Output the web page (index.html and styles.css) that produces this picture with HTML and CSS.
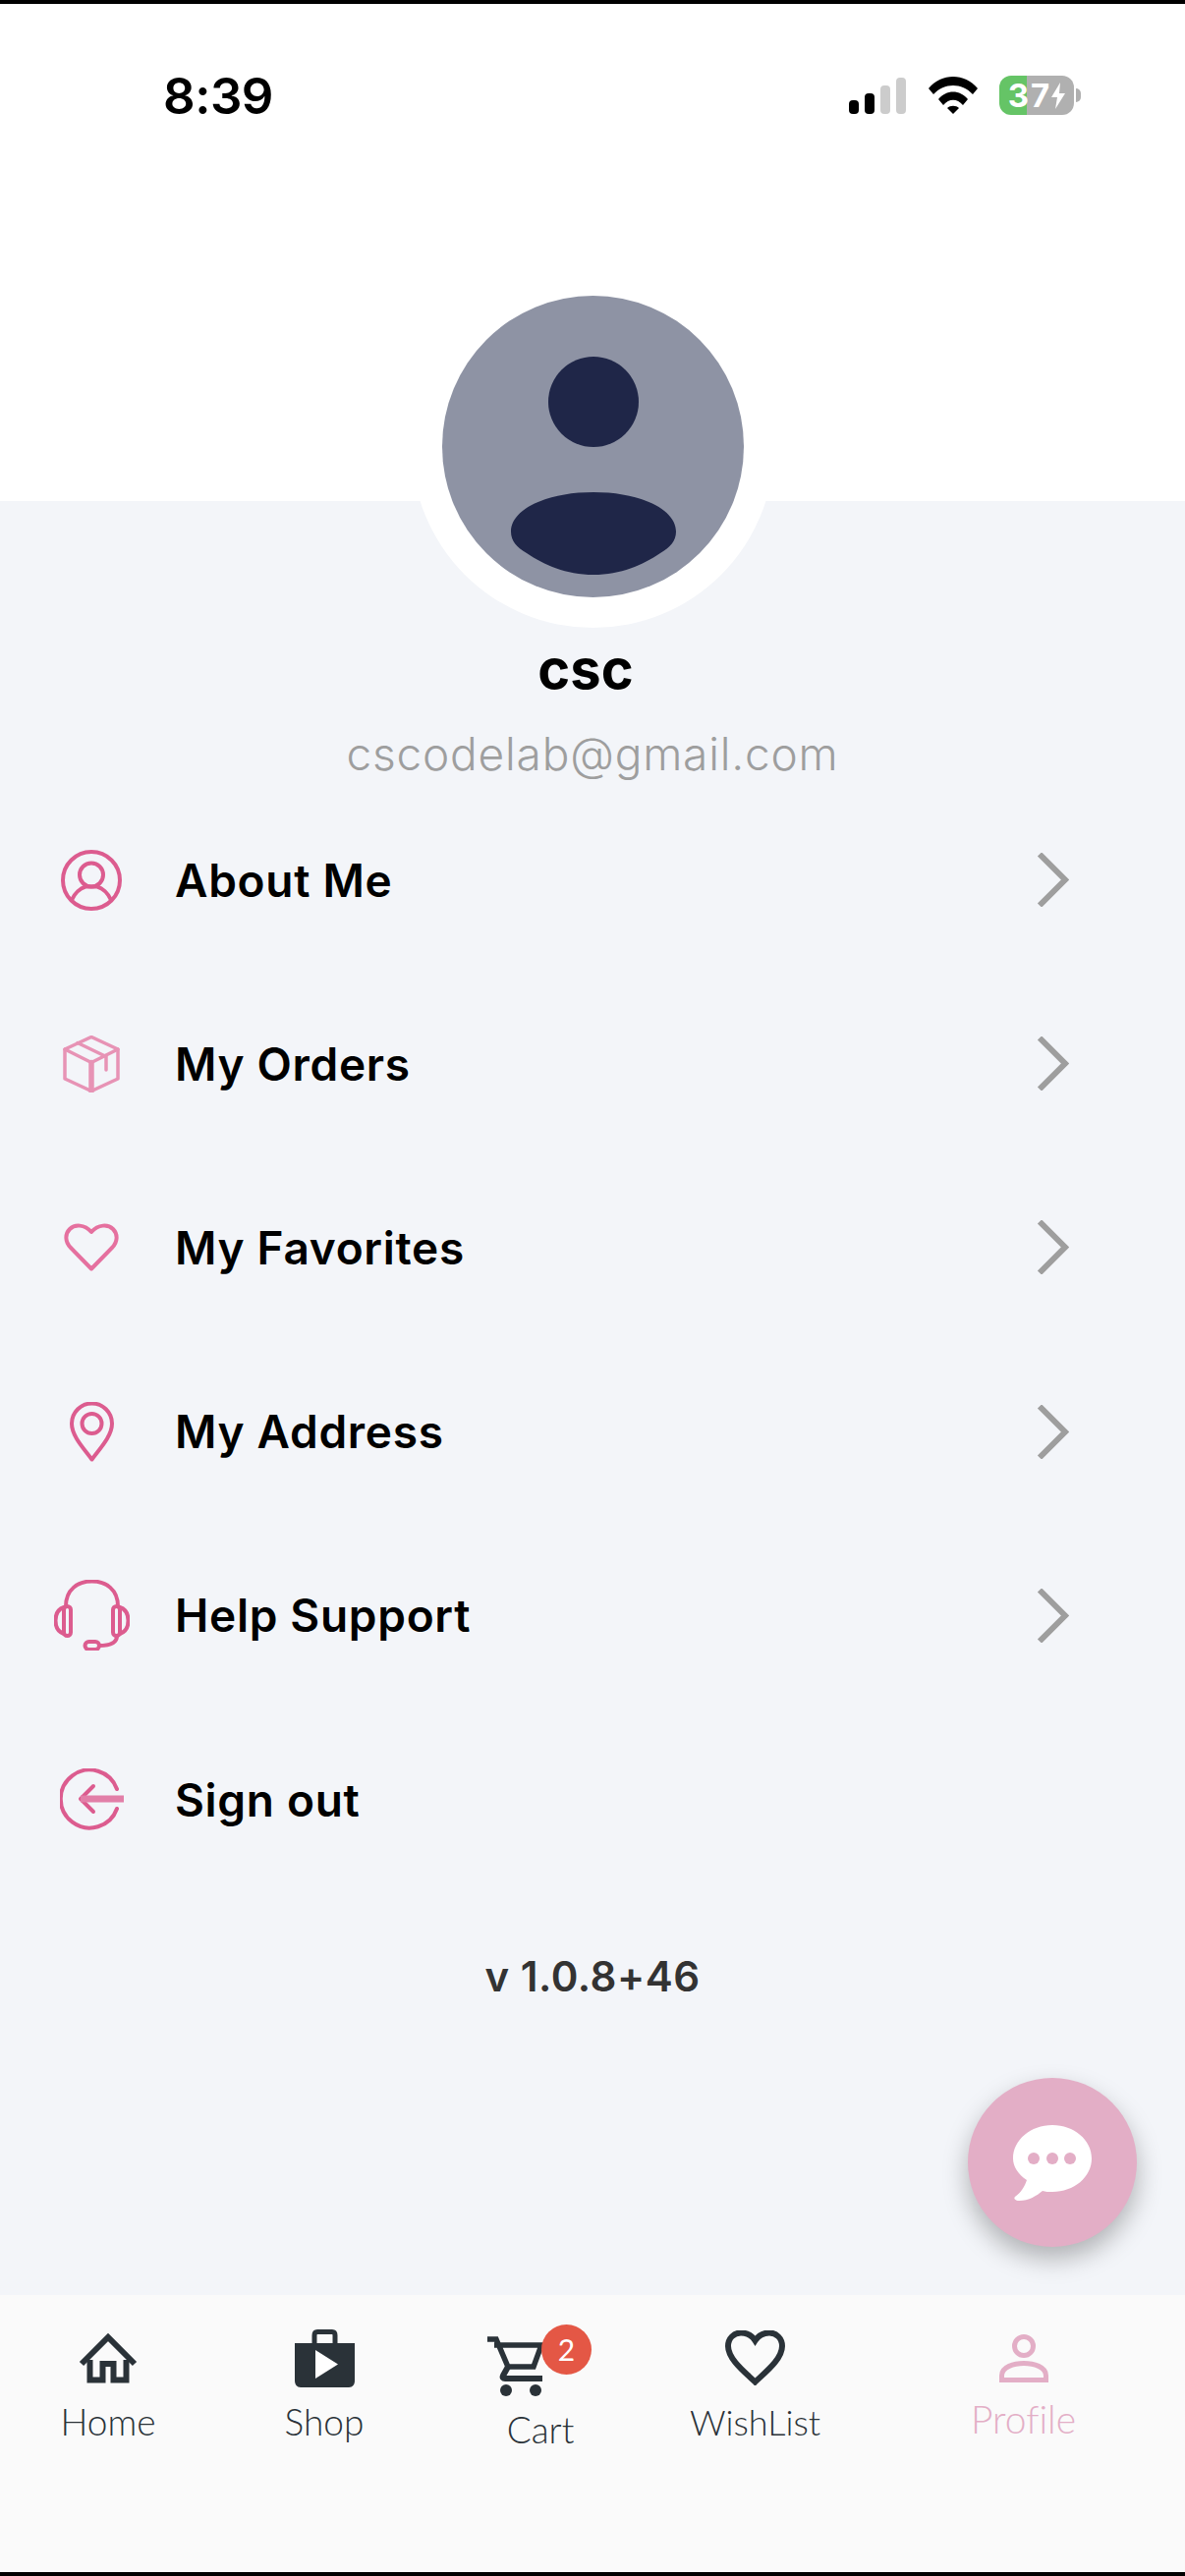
FILE: index.html
```html
<!DOCTYPE html>
<html lang="en">
<head>
<meta charset="utf-8">
<title>Profile</title>
<link rel="stylesheet" href="styles.css">
</head>
<body>
<div class="phone">
  <header class="top">
    <div class="status">
      <span class="time">8:39</span>
      <div class="status-icons">
        <svg class="signal" width="58" height="37" viewBox="0 0 58 37"><rect x="0" y="23" width="10" height="14" rx="4" fill="#000"/><rect x="16" y="16" width="10" height="21" rx="4" fill="#000"/><rect x="32" y="8" width="10" height="29" rx="4" fill="#ccc"/><rect x="48" y="0" width="10" height="37" rx="4" fill="#ccc"/></svg>
        <svg class="wifi" width="50" height="38" viewBox="0 0 50 38"><path d="M0 12C13-4 37-4 50 12L45 18C34 6 16 6 5 18Z"/><path d="M10 23C18 13 32 13 40 23L35 29C29 22 21 22 15 29Z"/><path d="M19 32C22 29 28 29 31 32L25 38Z"/></svg>
        <div class="battery">
          <div class="battery-body"><span class="battery-num">37</span><svg width="14" height="27" viewBox="0 0 14 27"><path d="M9 0L0 15H6L4 27L14 11H8Z" fill="#fff"/></svg></div>
          <span class="battery-nub"></span>
        </div>
      </div>
    </div>
    <div class="avatar-ring">
      <svg class="avatar" width="307" height="307" viewBox="0 0 307 307"><circle cx="153.500" cy="153.500" r="153.500" fill="#8e93a4"/><circle cx="154" cy="108" r="46" fill="#1f2648"/><path d="M70 240C70 218 105 200 154 200C203 200 238 218 238 240C238 250 232 256 222 262C204 274 182 284 154 284C126 284 104 274 86 262C76 256 70 250 70 240Z" fill="#1f2648"/></svg>
    </div>
  </header>

  <main class="main">
    <h1 class="name">csc</h1>
    <p class="email">cscodelab@gmail.com</p>
    <ul class="menu">
      <li class="row">
        <span class="row-icon"><svg width="62" height="62" viewBox="0 0 62 62" class="ic strong"><circle cx="31" cy="31" r="29"/><circle cx="31" cy="25.500" r="12"/><path d="M11 51C14 44 20 39 25 37.500H37C42 39 48 44 51 51"/></svg></span>
        <span class="row-label">About Me</span>
        <svg class="chev" width="33" height="55" viewBox="0 0 33 55"><path d="M3 1.500L29 27.500L3 53.500"/></svg>
      </li>
      <li class="row">
        <span class="row-icon"><svg width="58" height="58" viewBox="0 0 58 58" class="ic pale"><path d="M29 1.500L56 14V44L29 56.500L2 44V14Z"/><path d="M2 14L29 27.500L56 14"/><path d="M15 7.500L43 21"/><path d="M44 20.500V35"/><path d="M29 27.500V56.500" class="thick"/></svg></span>
        <span class="row-label">My Orders</span>
        <svg class="chev" width="33" height="55" viewBox="0 0 33 55"><path d="M3 1.500L29 27.500L3 53.500"/></svg>
      </li>
      <li class="row">
        <span class="row-icon"><svg width="56" height="49" viewBox="0 0 56 49" class="ic mid"><path d="M28 46.500L7 25C1 19 1 11 6 6C11 1 21 1 28 9C35 1 45 1 50 6C55 11 55 19 49 25Z"/></svg></span>
        <span class="row-label">My Favorites</span>
        <svg class="chev" width="33" height="55" viewBox="0 0 33 55"><path d="M3 1.500L29 27.500L3 53.500"/></svg>
      </li>
      <li class="row">
        <span class="row-icon"><svg width="45" height="61" viewBox="0 0 45 61" class="ic strong"><path d="M22.500 58.500C15 48 2 35 2 22A20.500 20.500 0 0 1 43 22C43 35 30 48 22.500 58.500Z"/><circle cx="22.500" cy="22" r="10"/></svg></span>
        <span class="row-label">My Address</span>
        <svg class="chev" width="33" height="55" viewBox="0 0 33 55"><path d="M3 1.500L29 27.500L3 53.500"/></svg>
      </li>
      <li class="row">
        <span class="row-icon"><svg width="77" height="72" viewBox="0 0 77 72" class="ic strong"><path d="M12 27C12 10 24 1.500 38.500 1.500S65 10 65 27"/><rect x="10" y="27" width="7" height="30" rx="3.500"/><rect x="60" y="27" width="7" height="30" rx="3.500"/><path d="M10 28C4 30 1.500 35 1.500 41.500S4 53 10 55"/><path d="M67 28C73 30 75.500 35 75.500 41.500S73 53 67 55"/><path d="M64 57C64 64 58 67 46 67"/><rect x="31.500" y="63" width="14.500" height="8" rx="4"/></svg></span>
        <span class="row-label">Help Support</span>
        <svg class="chev" width="33" height="55" viewBox="0 0 33 55"><path d="M3 1.500L29 27.500L3 53.500"/></svg>
      </li>
      <li class="row">
        <span class="row-icon"><svg width="65" height="63" viewBox="0 0 65 63" class="ic strong"><path d="M58 21A29.500 29.500 0 1 0 58 41"/><path d="M34 18L21 31L34 44"/><path d="M21 31H65" class="thick-pale"/></svg></span>
        <span class="row-label">Sign out</span>
      </li>
    </ul>
    <p class="version">v 1.0.8+46</p>
    <button class="fab" type="button" aria-label="Chat">
      <svg width="80" height="77" viewBox="0 0 80 77"><path d="M40 0C62 0 80 15 80 34C80 53 62 68 40 68C36 68 33 68 30 67C24 72 16 77 6 77C3 77 0 75 2 73C8 69 12 62 14 56C5 50 0 42 0 34C0 15 18 0 40 0Z" fill="#fff"/><circle cx="21" cy="34" r="6" fill="#e3aec6"/><circle cx="40" cy="34" r="6" fill="#e3aec6"/><circle cx="58" cy="34" r="6" fill="#e3aec6"/></svg>
    </button>
  </main>

  <nav class="nav">
    <div class="nav-item">
      <span class="nav-icon"><svg width="60" height="52" viewBox="0 0 60 52" class="dark-line"><path d="M3 32L30 5L57 32"/><path d="M11.500 28V48.500H24.500V32H35.500V48.500H48.500V28"/></svg></span>
      <span class="nav-label">Home</span>
    </div>
    <div class="nav-item">
      <span class="nav-icon"><svg width="61" height="59" viewBox="0 0 61 59"><path d="M20 15V6C20 4 21 2.500 23 2.500H38C40 2.500 41 4 41 6V15" fill="none" stroke="#2a3238" stroke-width="5"/><path d="M0 14H61V52C61 56 59 59 55 59H6C2 59 0 56 0 52Z" fill="#2a3238"/><path d="M21 21L44 35.500L21 50Z" fill="#fff"/></svg></span>
      <span class="nav-label">Shop</span>
    </div>
    <div class="nav-item nav-item-cart">
      <span class="nav-icon">
        <svg width="57" height="61" viewBox="0 0 57 61"><path d="M0 3H9L21 31H47L55 9H7" fill="none" stroke="#2a3238" stroke-width="5.500"/><path d="M21 31L16 40C15 42 16 43 18 43H56" fill="none" stroke="#2a3238" stroke-width="6"/><circle cx="19" cy="55" r="6" fill="#2a3238"/><circle cx="49" cy="55" r="6" fill="#2a3238"/></svg>
        <span class="badge">2</span>
      </span>
      <span class="nav-label">Cart</span>
    </div>
    <div class="nav-item">
      <span class="nav-icon"><svg width="61" height="56" viewBox="0 0 61 56" class="dark-line"><path d="M30.500 52.500C22 44 3 30 3 16C3 8 9 2.500 16 2.500C22 2.500 27 5 30.500 10.500C34 5 39 2.500 45 2.500C52 2.500 58 8 58 16C58 30 39 44 30.500 52.500Z"/></svg></span>
      <span class="nav-label nav-label-tight">WishList</span>
    </div>
    <div class="nav-item nav-item-active">
      <span class="nav-icon"><svg width="50" height="49" viewBox="0 0 50 49"><circle cx="25" cy="12" r="9.500" fill="none" stroke="#e3aec6" stroke-width="5"/><path d="M2.500 46.500V42C2.500 33 15 29.500 25 29.500S47.500 33 47.500 42V46.500Z" fill="none" stroke="#e3aec6" stroke-width="5"/></svg></span>
      <span class="nav-label">Profile</span>
    </div>
  </nav>
</div>
</body>
</html>
```
FILE: styles.css
```css
* { box-sizing: border-box; }
html, body { margin: 0; padding: 0; }
body { background: #000; font-family: "Inter", "Liberation Sans", sans-serif; }
.phone {
  width: 1206px;
  height: 2622px;
  display: flex;
  flex-direction: column;
  border-top: 4px solid #000;
  border-bottom: 4px solid #000;
  overflow: hidden;
}
.top {
  height: 506px;
  flex: none;
  background: #fff;
  display: flex;
  flex-direction: column;
  align-items: center;
}
.status {
  width: 100%;
  height: 266px;
  flex: none;
  padding: 75px 106px 0 166px;
  display: flex;
  justify-content: space-between;
  align-items: flex-start;
}
.time { font-size: 51px; line-height: 38px; font-weight: 600; color: #000; letter-spacing: -0.5px; }
.status-icons { display: flex; align-items: flex-start; }
.wifi { margin-left: 23px; margin-top: -1px; }
.battery { display: flex; align-items: center; margin-left: 22px; margin-top: -2px; }
.battery-body {
  width: 76px;
  height: 40px;
  border-radius: 12px;
  background: linear-gradient(to right, #65c466 28px, #b0b0b0 28px);
  display: flex;
  align-items: center;
  justify-content: center;
}
.battery-num { font-size: 33px; font-weight: 700; letter-spacing: 2px; color: #fff; line-height: 40px; }
.battery-nub { width: 5px; height: 14px; margin-left: 2px; background: #b0b0b0; border-radius: 0 7px 7px 0; }
.avatar-ring {
  width: 369px;
  height: 369px;
  flex: none;
  margin-bottom: -129px;
  border-radius: 50%;
  background: #fff;
  position: relative;
  z-index: 1;
  display: flex;
  align-items: center;
  justify-content: center;
}
.avatar { display: block; }
.main {
  flex: 1;
  min-height: 0;
  position: relative;
  background: #f3f5f9;
  padding-top: 129px;
  display: flex;
  flex-direction: column;
  align-items: center;
}
.name { margin: 0 14px 0 0; height: 90px; font-size: 56px; line-height: 84px; font-weight: 700; color: #000; }
.email { margin: 0; height: 73px; font-size: 46px; line-height: 76px; font-weight: 300; letter-spacing: 0.8px; color: #9e9e9e; }
.menu { list-style: none; margin: 0; padding: 0; width: 100%; }
.row {
  height: 187.200px;
  display: flex;
  align-items: center;
  padding: 0 118px 0 53px;
}
.row-icon { width: 80px; flex: none; display: flex; justify-content: center; align-items: center; }
.row-label { flex: 1; margin-left: 45px; font-size: 46px; font-weight: 600; color: #000; letter-spacing: 0.7px; }
.ic { display: block; fill: none; stroke-linejoin: round; stroke-linecap: round; }
.ic.strong { stroke: #dc5c8f; stroke-width: 4; }
.ic.mid { stroke: #e5709f; stroke-width: 4; }
.ic.pale { stroke: #e793b5; stroke-width: 3.5; }
.ic .thick { stroke-width: 5.500; }
.ic .thick-pale { stroke-width: 7; stroke: #e27fa8; stroke-linecap: butt; }
.chev { display: block; flex: none; fill: none; stroke: #9e9e9e; stroke-width: 6; }
.version { margin: 0; margin-top: 57px; font-size: 42px; line-height: 60px; font-weight: 600; letter-spacing: 0.5px; color: #333; }
.fab {
  position: absolute;
  right: 49px;
  bottom: 49px;
  width: 172px;
  height: 172px;
  border: none;
  padding: 0;
  border-radius: 50%;
  background: #e3aec6;
  box-shadow: 0 12px 26px rgba(0, 0, 0, 0.28);
  display: flex;
  align-items: center;
  justify-content: center;
}
.nav {
  height: 282px;
  flex: none;
  background: #fafafa;
  padding-top: 34px;
  display: grid;
  grid-template-columns: 220px 220px 220px 217px 1fr;
  align-items: start;
  font-family: "Lato", "Liberation Sans", sans-serif;
  font-variant-ligatures: none;
}
.nav-item { display: flex; flex-direction: column; align-items: center; color: #2a3238; }
.nav-item-cart { padding-top: 8px; }
.nav-item-cart .nav-icon { margin-right: 51px; }
.nav-item-active { color: #e3aec6; }
.nav-icon { position: relative; height: 60px; display: flex; align-items: center; justify-content: center; }
.nav-icon svg { display: block; }
.dark-line { fill: none; stroke: #2a3238; stroke-width: 6; }
.badge {
  position: absolute;
  left: 55px;
  top: -12px;
  width: 51px;
  height: 51px;
  border-radius: 50%;
  background: #e45745;
  color: #fff;
  font-size: 30px;
  line-height: 51px;
  text-align: center;
}
.nav-label { margin-top: 12px; font-size: 37px; line-height: 46px; font-weight: 300; }
.nav-label-tight { font-size: 36px; }
.nav-item-active .nav-label { margin-top: 9px; font-size: 39px; }
```
